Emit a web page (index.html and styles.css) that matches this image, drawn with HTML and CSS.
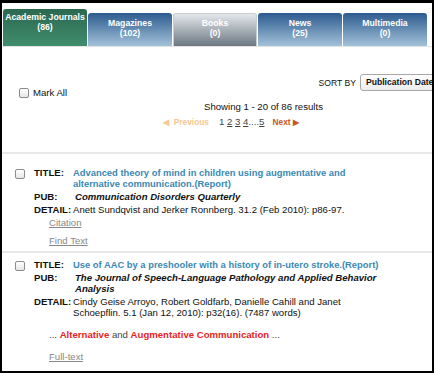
FILE: index.html
```html
<!DOCTYPE html>
<html lang="en">
<head>
    <meta charset="UTF-8">
    <title>Search Results</title>
    <link rel="stylesheet" href="styles.css">
</head>
<body>
    <div class="frame">
        <div class="tabs">
            <div class="tab active">Academic Journals<br>(86)</div>
            <div class="tab">Magazines<br>(102)</div>
            <div class="tab grey">Books<br>(0)</div>
            <div class="tab">News<br>(25)</div>
            <div class="tab">Multimedia<br>(0)</div>
        </div>

        <div class="toolbar">
            <div class="mark-all"><span class="check"></span>Mark All</div>
            <div class="sort">
                <span class="sort-label">SORT BY</span>
                <div class="select">Publication Date</div>
            </div>
        </div>

        <div class="showing">Showing 1 - 20 of 86 results</div>
        <div class="pager">
            <span class="prev">&#9664;&nbsp; Previous</span>
            <span class="pages">1 <u>2</u> <u>3</u> <u>4</u>....<u>5</u></span>
            <span class="next">Next &#9654;</span>
        </div>

        <div class="divider first"></div>

        <div class="item">
            <span class="check"></span>
            <div class="item-body">
                <div class="fields">
                    <span class="label">TITLE:</span>
                    <a class="title">Advanced theory of mind in children using augmentative and alternative communication.(Report)</a>
                    <span class="label">PUB:</span>
                    <span class="pub">Communication Disorders Quarterly</span>
                    <span class="label">DETAIL:</span>
                    <span>Anett Sundqvist and Jerker Ronnberg. 31.2 (Feb 2010): p86-97.</span>
                </div>
                <div class="links">
                    <a>Citation</a>
                    <a>Find Text</a>
                </div>
            </div>
        </div>

        <div class="divider"></div>

        <div class="item">
            <span class="check"></span>
            <div class="item-body">
                <div class="fields">
                    <span class="label">TITLE:</span>
                    <a class="title">Use of AAC by a preshooler with a history of in-utero stroke.(Report)</a>
                    <span class="label">PUB:</span>
                    <span class="pub">The Journal of Speech-Language Pathology and Applied Behavior Analysis</span>
                    <span class="label">DETAIL:</span>
                    <span>Cindy Geise Arroyo, Robert Goldfarb, Danielle Cahill and Janet Schoepflin. 5.1 (Jan 12, 2010): p32(16). (7487 words)</span>
                </div>
                <div class="snippet">... <b>Alternative</b> and <b>Augmentative Communication</b> ...</div>
                <div class="links">
                    <a>Full-text</a>
                </div>
            </div>
        </div>
    </div>
</body>
</html>
```

FILE: styles.css
```css
body {
    margin: 0;
    font-family: 'Liberation Sans', Arial, sans-serif;
    font-size: 9.6px;
    color: #111;
}
.frame {
    width: 434px;
    height: 373px;
    box-sizing: border-box;
    border: solid #000;
    border-width: 3px 2px 2px 2px;
    overflow: hidden;
    background: #fff;
}
.tabs {
    display: flex;
    align-items: flex-end;
    height: 37px;
    padding: 6px 0 0 1px;
    border-bottom: 1px solid #e4e4e4;
}
.tab {
    width: 84px;
    height: 33px;
    margin-right: 1px;
    box-sizing: border-box;
    padding-top: 5px;
    border-radius: 3px 3px 0 0;
    background: linear-gradient(#2c5b8f, #a3c2d9);
    color: #fff;
    font-size: 8.7px;
    font-weight: bold;
    line-height: 10px;
    text-align: center;
    white-space: nowrap;
}
.tab.active {
    height: 37px;
    padding-top: 3px;
    background: linear-gradient(#2b6850, #408d6d);
}
.tab.grey {
    background: linear-gradient(#e3e7eb, #6c7782);
    border: 1px solid #c8cdd2;
    border-bottom: none;
    padding-top: 4px;
}
.toolbar {
    display: flex;
    justify-content: space-between;
    align-items: flex-start;
    margin-top: 27px;
}
.mark-all {
    display: flex;
    align-items: center;
    padding: 13px 0 0 17px;
    line-height: 12px;
}
.mark-all .check {
    margin-right: 4px;
}
.check {
    display: inline-block;
    width: 8px;
    height: 8px;
    border: 1px solid #8c8c8c;
    border-radius: 2px;
    background: linear-gradient(#fff, #e6e6e6);
    flex-shrink: 0;
}
.sort {
    display: flex;
    align-items: center;
    margin-right: -10px;
}
.sort-label {
    font-size: 8.6px;
    margin-right: 4px;
}
.select {
    width: 82px;
    height: 17px;
    box-sizing: border-box;
    padding-left: 5px;
    border: 1px solid #a8a8a8;
    border-radius: 3px;
    background: linear-gradient(#fff, #ececec);
    font-size: 8.6px;
    font-weight: bold;
    line-height: 15px;
    white-space: nowrap;
    overflow: hidden;
}
.showing {
    margin-top: 2px;
    padding-left: 202px;
    line-height: 12px;
}
.pager {
    display: flex;
    align-items: center;
    margin-top: 3px;
    padding-left: 161px;
    line-height: 12px;
    white-space: nowrap;
}
.prev {
    color: #f6c993;
    margin-right: 10px;
}
.pages {
    color: #444;
    margin-right: 8px;
}
.next {
    color: #c9581e;
}
.prev, .next {
    font-size: 8.4px;
    font-weight: bold;
}
.divider {
    height: 2px;
    background: #e8e8e8;
}
.divider.first {
    margin-top: 24px;
    margin-bottom: 7px;
}
.item {
    display: flex;
    align-items: flex-start;
    padding: 6px 0 5px 13px;
}
.item > .check {
    margin-top: 2px;
}
.item-body {
    margin-left: 9px;
    width: 350px;
}
.fields {
    display: grid;
    grid-template-columns: 39px 1fr;
    row-gap: 2px;
    line-height: 11px;
}
.label {
    font-weight: bold;
}
.title {
    color: #3b88b3;
    font-size: 9.4px;
    font-weight: bold;
}
.pub {
    font-weight: bold;
    font-style: italic;
    padding-left: 2px;
}
.links {
    padding-left: 15px;
    margin-top: 2px;
    line-height: 11px;
}
.links a {
    display: block;
    color: #888;
    text-decoration: underline;
}
.links a + a {
    margin-top: 7px;
}
.snippet {
    margin-top: 11px;
    margin-bottom: 11px;
    padding-left: 15px;
    color: #444;
    line-height: 11px;
}
.snippet b {
    color: #e8241f;
}
```
